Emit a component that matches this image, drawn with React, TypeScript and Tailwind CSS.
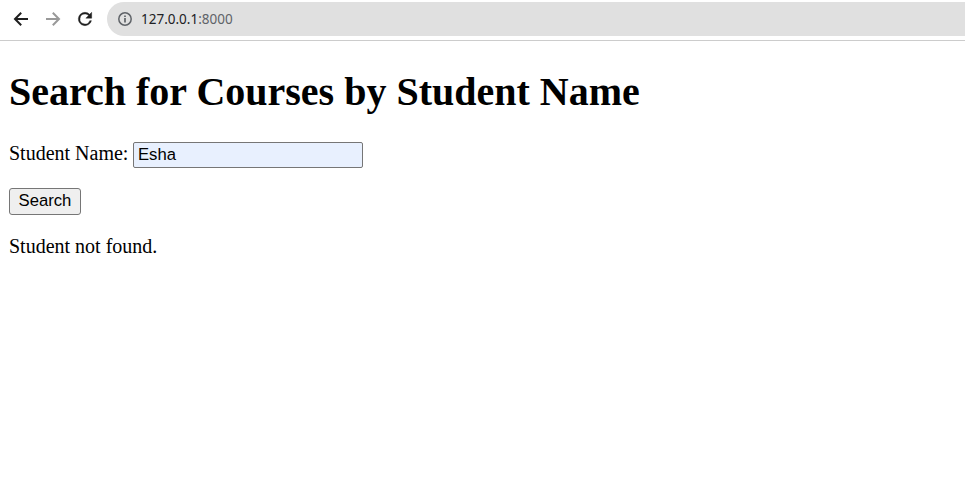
export default function App() {
  return (
    <div className="h-[480px] w-full overflow-hidden bg-white text-black">
      <header className="flex h-[41px] items-start border-b border-[#cccccc] pt-[2px]">
        <nav className="flex h-[34px] w-[107px] shrink-0 items-center gap-3 pl-[11px]">
          <svg className="size-5 shrink-0" viewBox="0 0 20 20" fill="none" stroke="#1f1f1f" strokeWidth="2"><path d="M17 10H4.5M10.2 3.8L4 10l6.2 6.2" /></svg>
          <svg className="size-5 shrink-0" viewBox="0 0 20 20" fill="none" stroke="#999999" strokeWidth="2"><path d="M3 10h12.5M9.8 3.8L16 10l-6.2 6.2" /></svg>
          <svg className="size-5 shrink-0" viewBox="0 0 24 24" fill="#1f1f1f" stroke="#1f1f1f" strokeWidth="0.5"><path d="M17.65 6.35A7.958 7.958 0 0 0 12 4a8 8 0 1 0 7.73 10h-2.08A6 6 0 1 1 12 6c1.66 0 3.14.69 4.22 1.78L13 11h7V4l-2.35 2.35z" /></svg>
        </nav>
        <div className="flex h-[34px] grow items-center rounded-l-full bg-[#e0e0e0] pl-[10px]">
          <svg className="mr-2 size-4" viewBox="0 0 16 16" fill="none" stroke="#5f6368" strokeWidth="1.5"><circle cx="8" cy="8" r="6.2" /><path d="M8 7v4.5M8 4.5V6" strokeWidth="1.7" /></svg>
          <span className="pt-[2px] font-['Noto_Sans',sans-serif] text-[13.5px] leading-none text-[#202124]">127.0.0.1<span className="text-[#5f6368]">:8000</span></span>
        </div>
      </header>
      <main className="px-[9px] font-['Liberation_Serif',serif] text-xl">
        <h1 className="pt-[28px] text-[40px] leading-[46px] font-bold">Search for Courses by Student Name</h1>
        <form className="mt-[27px]" onSubmit={(e) => e.preventDefault()}>
          <div className="flex h-[26px] items-start">
            <label htmlFor="student" className="mr-[5px] leading-[23px]">Student Name:</label>
            <input id="student" defaultValue="Esha" className="h-[26px] w-[230px] rounded-[2px] border border-[#767676] bg-[#e8f0fe] px-[3.5px] font-['Liberation_Sans',sans-serif] text-[16.667px]" />
          </div>
          <button className="mt-5 flex h-[27px] w-[72px] items-center justify-center rounded-[3px] border border-[#767676] bg-[#efefef] pb-[2px] font-['Liberation_Sans',sans-serif] text-[16.667px]">Search</button>
        </form>
        <p className="mt-5 leading-[23px]">Student not found.</p>
      </main>
    </div>
  );
}
